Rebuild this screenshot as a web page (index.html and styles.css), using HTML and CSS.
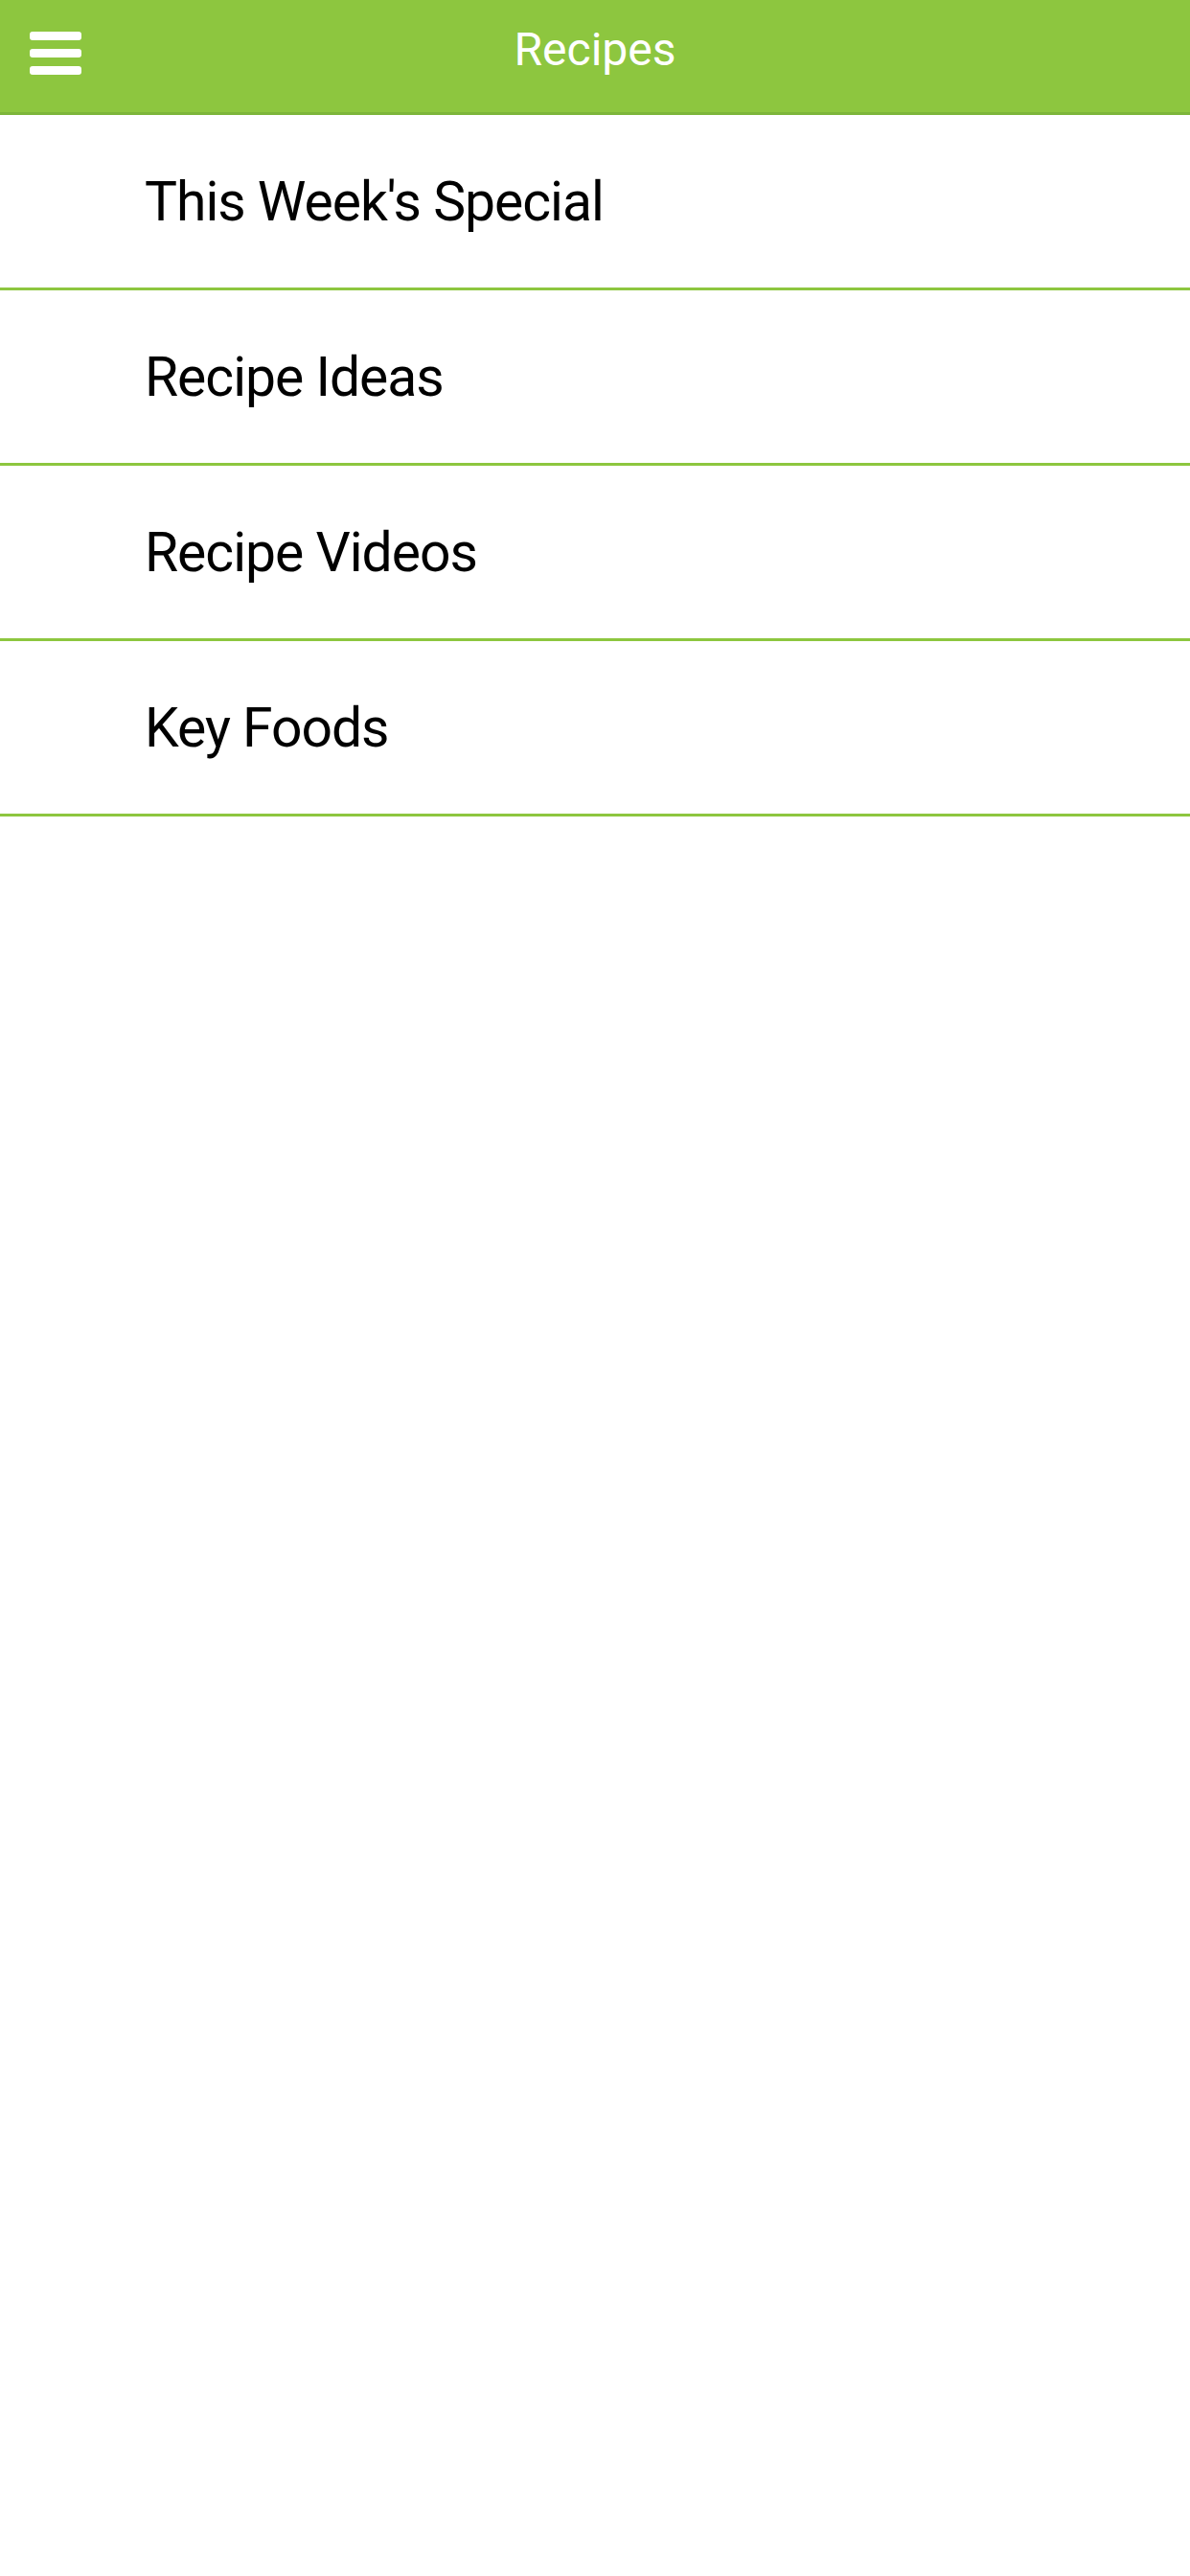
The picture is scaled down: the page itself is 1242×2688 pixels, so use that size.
FILE: index.html
```html
<!DOCTYPE html>
<html lang="en">
<head>
    <meta charset="UTF-8">
    <meta name="viewport" content="width=device-width, initial-scale=1.0">
    <title>Recipes</title>
    <link rel="stylesheet" href="styles.css">
</head>
<body>
    <div class="header">
        <div class="menu-btn">
            <span></span><span></span><span></span>
        </div>
        <h1 class="title">Recipes</h1>
    </div>
    <ul class="list">
        <li class="item">This Week's Special</li>
        <li class="item">Recipe Ideas</li>
        <li class="item">Recipe Videos</li>
        <li class="item">Key Foods</li>
    </ul>
</body>
</html>
```

FILE: styles.css
```css
body {
    margin: 0;
    background: #fff;
    font-family: Roboto, "Liberation Sans", sans-serif;
}
.header {
    position: relative;
    height: 117px;
    background: #8dc63f;
    border-bottom: 3px solid #7db53a;
    display: flex;
    align-items: center;
    justify-content: center;
}
.menu-btn {
    position: absolute;
    left: 31px;
    top: 33px;
    display: flex;
    flex-direction: column;
    gap: 9px;
}
.menu-btn span {
    display: block;
    width: 54px;
    height: 9px;
    border-radius: 3px;
    background: #fff;
}
.title {
    margin: 0;
    color: #fff;
    font-size: 48px;
    font-weight: 400;
    line-height: 1;
    padding-bottom: 14px;
}
.list {
    list-style: none;
    margin: 0;
    padding: 0;
}
.item {
    height: 183px;
    display: flex;
    align-items: center;
    padding-left: 151px;
    border-bottom: 3px solid #8dc63f;
    color: #000;
    font-size: 57px;
    letter-spacing: -1px;
    box-sizing: border-box;
}
```
